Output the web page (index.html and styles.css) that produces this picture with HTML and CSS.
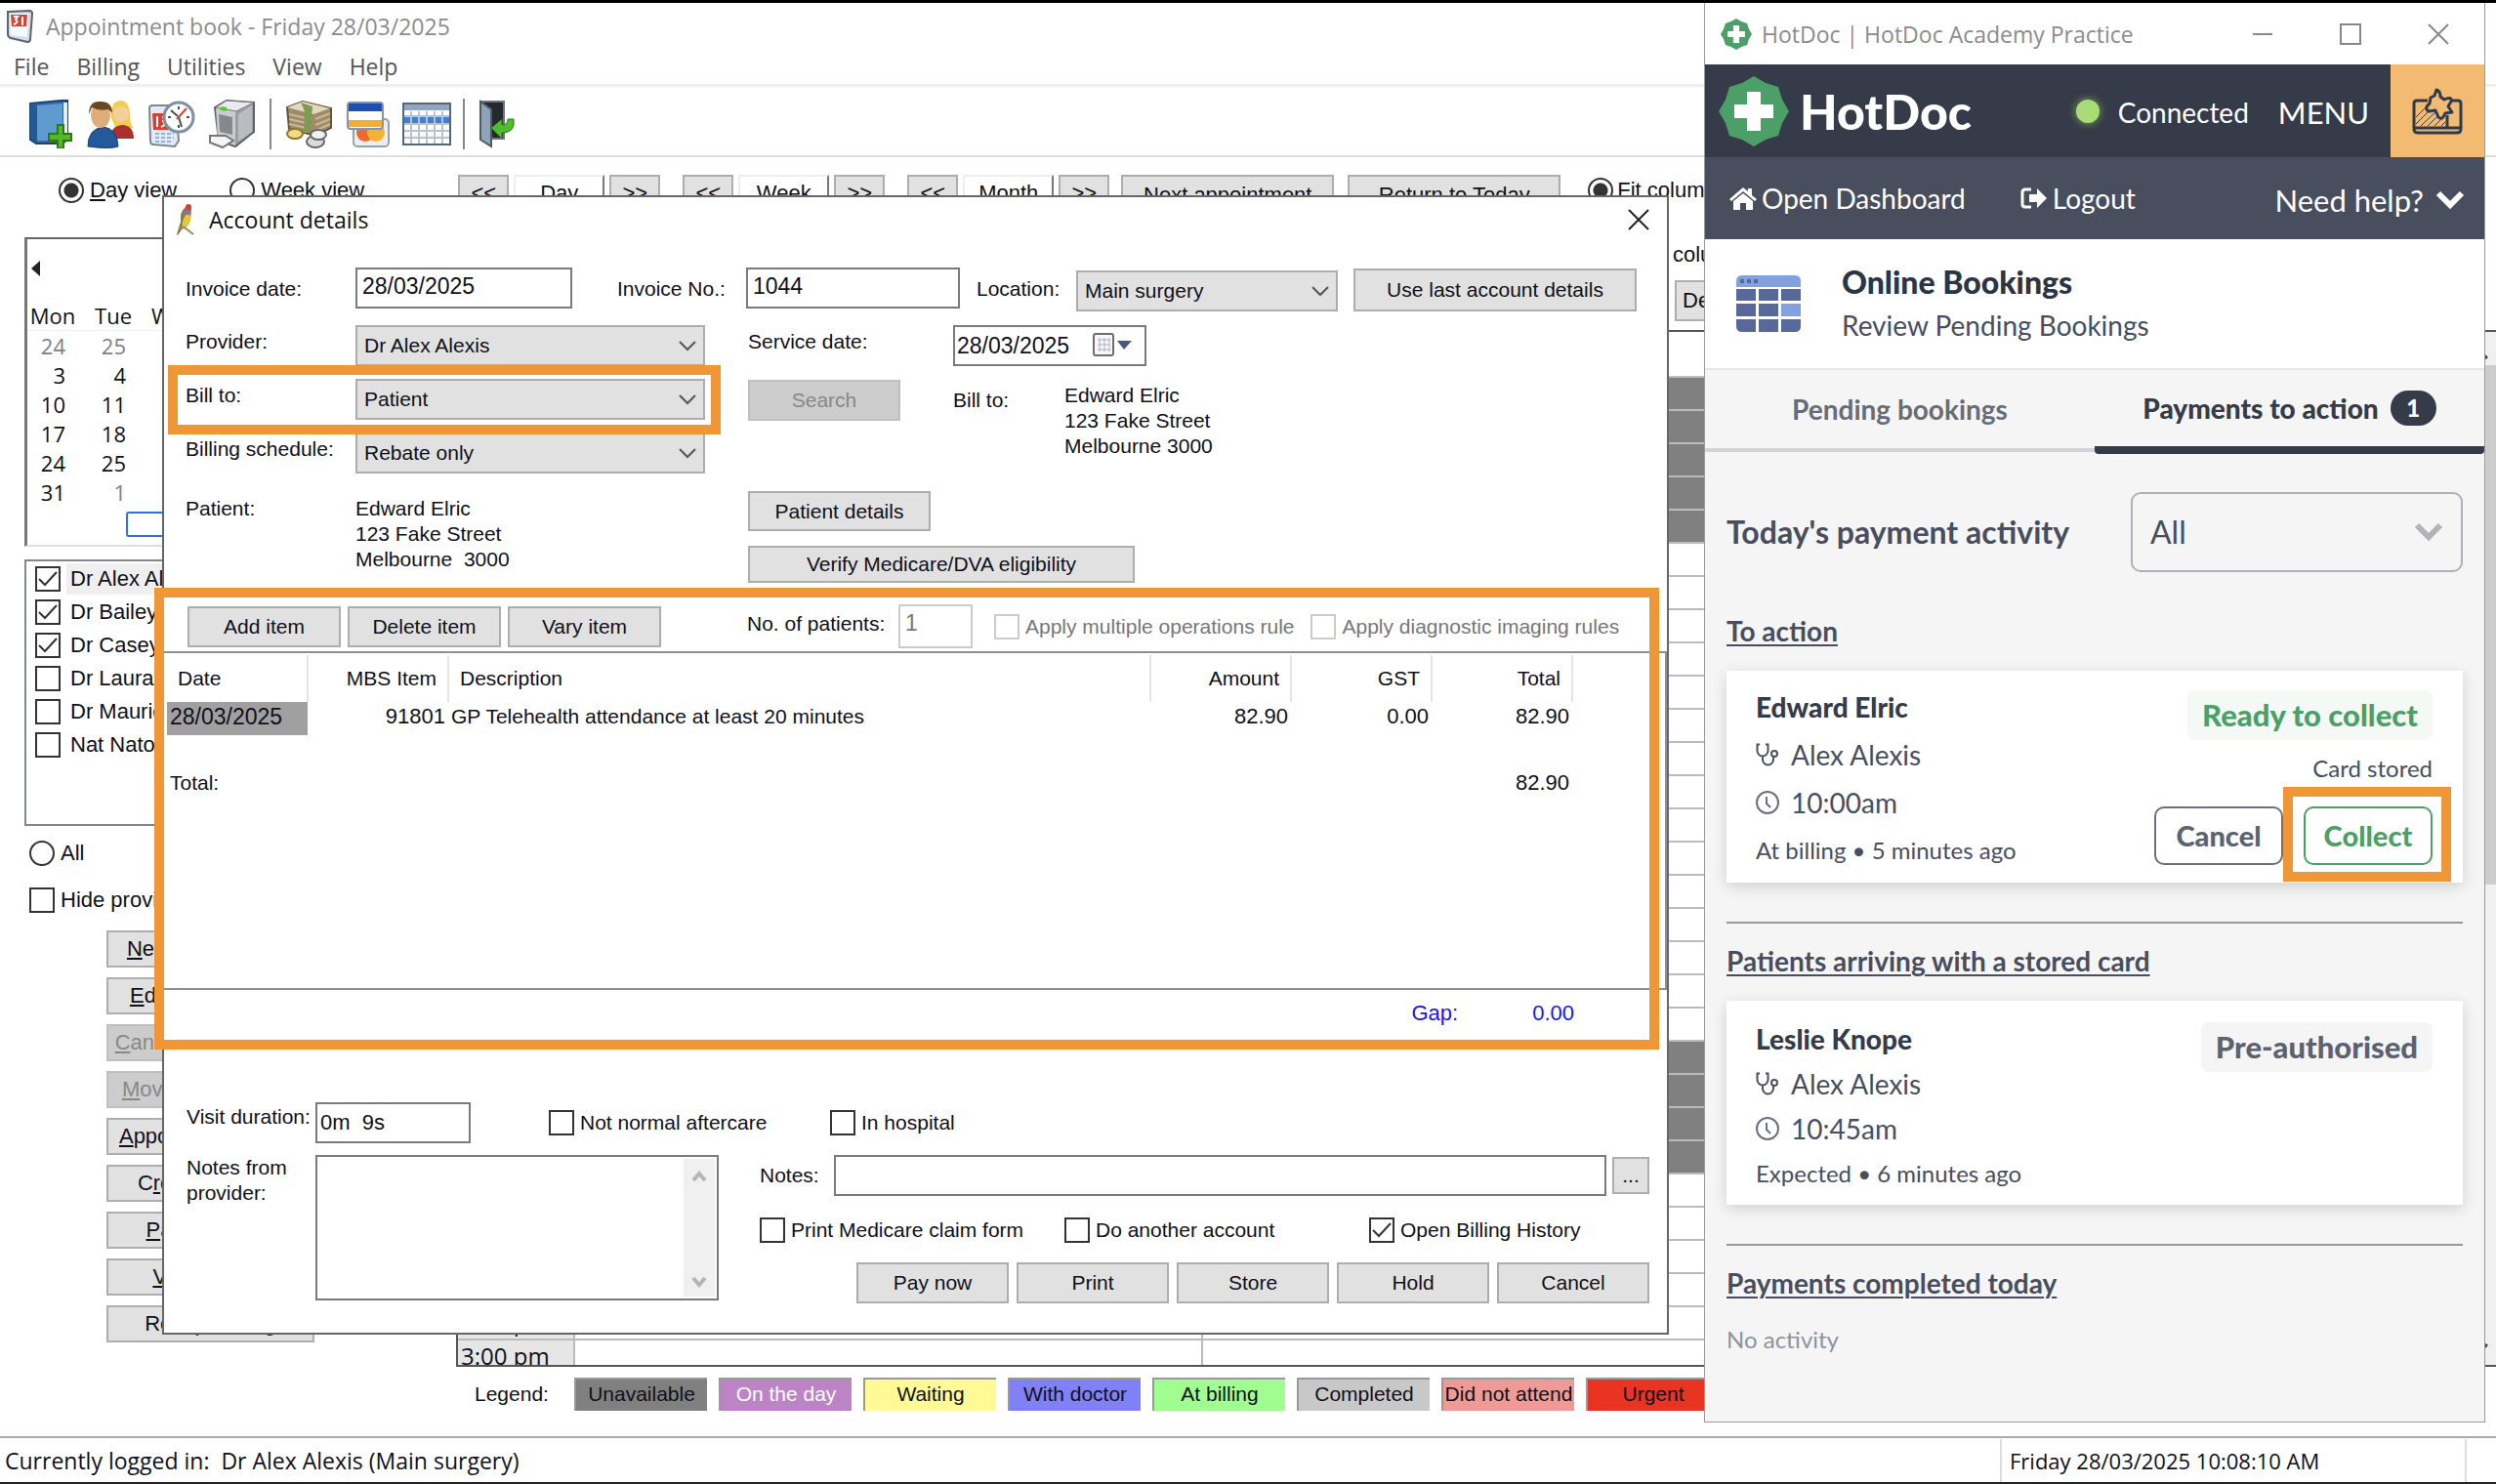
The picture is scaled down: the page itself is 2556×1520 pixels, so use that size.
FILE: index.html
```html
<!DOCTYPE html>
<html lang="en">
<head>
<meta charset="utf-8">
<title>Appointment book - Friday 28/03/2025</title>
<link rel="stylesheet" href="styles.css">
</head>
<body>
<svg width="0" height="0" class="defs" aria-hidden="true">
  <symbol id="hotdoc" viewBox="-36 -36 72 72">
    <path fill="#4c9f67" d="M0-36 12-29 25-25 29-12 36 0 29 12 25 25 12 29 0 36-12 29-25 25-29 12-36 0-29-12-25-25-12-29Z"/>
    <path fill="#fff" d="M-7-20H7V-7H20V7H7V20H-7V7H-20V-7H-7Z"/>
  </symbol>
  <symbol id="steth" viewBox="0 0 24 24">
    <path fill="none" stroke="#4a505e" stroke-width="2" d="M4 1.500H1.500V8a5.500 5.500 0 0 0 11 0V1.500H10M7 13.500V17a5.500 5.500 0 0 0 11 0V14"/>
    <circle cx="19" cy="11" r="3" fill="none" stroke="#4a505e" stroke-width="2"/>
  </symbol>
  <symbol id="clock" viewBox="0 0 24 24">
    <circle cx="12" cy="12" r="11" fill="none" stroke="#6b7080" stroke-width="2"/>
    <path fill="none" stroke="#6b7080" stroke-width="2" d="M11 6v7l4 4"/>
  </symbol>
</svg>

<main class="app">
  <header class="app-title">
    <svg width="30" height="34" viewBox="0 0 30 34"><path d="M3 2 25 1q3 0 3 3l-2 26q0 3-3 3L6 29q-3-1-3-4z" fill="#d5dde8" stroke="#5b6472" stroke-width="2"/><path d="M5 4h19l-1 24-17-2z" fill="#f6f9ff"/><path d="M6 5h17l-1 12H7z" fill="#cf4a36"/><path d="M9 7h4l-2 3q4 3-2 5M18 7v9" stroke="#fff" stroke-width="2" fill="none"/></svg>
    <h1>Appointment book - Friday 28/03/2025</h1>
  </header>
  <nav class="menu">
    <a href="#">File</a><a href="#">Billing</a><a href="#">Utilities</a><a href="#">View</a><a href="#">Help</a>
  </nav>
  <div class="toolbar">
    <button aria-label="New appointment book"><svg width="48" height="50" viewBox="0 0 48 50"><path d="M3 4 34 1h7v40l-5 4H9l-6-4z" fill="#2f6ca6" stroke="#1d4470" stroke-width="2"/><path d="M10 6 36 4v38H10z" fill="#5f9bd0"/><path d="M37 3h4v38h-4z" fill="#e6edf4"/><path d="M3 4l7 2v38l-7-4z" fill="#245a8f"/><path d="M31 26h6v9h8v7h-8v8h-6v-8h-9v-7h9z" fill="#57b52b" stroke="#2b7a13" stroke-width="2"/></svg></button>
    <button aria-label="Patients"><svg width="50" height="50" viewBox="0 0 50 50"><path d="M26 18q-1-16 9-17 11 0 10 20l3 8H30z" fill="#f2ce4e"/><path d="M24 40q2-14 14-14 11 1 11 14z" fill="#a8322a"/><circle cx="36" cy="15" r="8" fill="#f4cf9d"/><path d="M2 48q0-18 16-20 14 2 15 20-8 3-31 0z" fill="#245a9c" stroke="#173d70"/><ellipse cx="15" cy="16" rx="10" ry="13" fill="#dfae78"/><path d="M3 15Q3 1 15 2q12 0 12 12l-4-4q-10 2-17-2z" fill="#6a4725"/></svg></button>
    <button aria-label="Waiting room"><svg width="50" height="50" viewBox="0 0 50 50"><path d="M3 9q0-3 3-3h24l3 36-4 6L7 46q-3 0-3-4z" fill="#e3eaf3" stroke="#7c8796" stroke-width="2"/><path d="M6 14h17v17H7z" fill="#d4412e"/><path d="M11 17v11m5-10h4l-3 4q4 4-2 6" stroke="#fff" stroke-width="2" fill="none"/><path d="M9 35h19M9 39h19M9 43h17" stroke="#8fb1dc" stroke-width="2" stroke-dasharray="4 2"/><circle cx="33" cy="18" r="15" fill="#fff" stroke="#7c8fa5" stroke-width="3"/><path d="M33 7v3m0 16v3M22 18h3m16 0h3M32 17l-7-6m8 7 3 10" stroke="#46505c" stroke-width="2"/><path d="M31 20 41 9" stroke="#d4412e" stroke-width="2"/></svg></button>
    <button aria-label="Print"><svg width="52" height="50" viewBox="0 0 52 50"><path d="M8 8 20 1l28 2v30L29 48 12 42z" fill="#9b9fa3" stroke="#606468" stroke-width="2"/><path d="m9 8 20 4v35l-18-6z" fill="#c9ccd0"/><path d="M9 8 20 1l28 2-18 9z" fill="#e9ebee" stroke="#777" /><path d="M32 15 46 6v27L32 43z" fill="#b9bcc1"/><path d="M12 15l14 3v18l-13-3z" fill="#85898e"/><path d="M3 37h16l8 5-11 7-13-5z" fill="#f5f5f5" stroke="#777" stroke-width="2"/><path d="M14 9l6 1" stroke="#4ad02c" stroke-width="4"/></svg></button>
    <span class="sep"></span>
    <button aria-label="Payments"><svg width="50" height="50" viewBox="0 0 50 50"><path d="M2 8 18 2l12 3 17 4v20L31 37 4 30z" fill="#a08a6a" stroke="#665338" stroke-width="2"/><path d="M2 8 18 2l28 7-17 6z" fill="#e3d9c3"/><path d="M4 15l22 5m-22 0 22 5M4 25l22 5m5-10 15-6M31 26l15-6M31 32l15-7" stroke="#c9b896" stroke-width="2"/><path d="M16 3l12 4-2 27h-7l1-22z" fill="#7e9b52"/><ellipse cx="10" cy="35" rx="8" ry="5" fill="#f0dc82" stroke="#8f762a" stroke-width="2"/><ellipse cx="31" cy="43" rx="9" ry="6" fill="#d9dbde" stroke="#666" stroke-width="2"/><ellipse cx="34" cy="36" rx="8" ry="5" fill="#eff0f2" stroke="#666" stroke-width="2"/></svg></button>
    <button aria-label="Cards"><svg width="46" height="50" viewBox="0 0 46 50"><rect x="8" y="20" width="36" height="28" rx="4" fill="#eceff2" stroke="#9aa0a8" stroke-width="2"/><circle cx="20" cy="34" r="9" fill="#ee6a2c"/><circle cx="31" cy="34" r="9" fill="#f6b32f"/><rect x="2" y="3" width="36" height="27" rx="3" fill="#fff" stroke="#8c929b" stroke-width="2"/><path d="M3 4h34v8H3z" fill="#1c4fb0"/><path d="M3 21h34v7H3z" fill="#efb032"/></svg></button>
    <button aria-label="Calendar"><svg width="50" height="46" viewBox="0 0 50 46"><rect x="1" y="2" width="48" height="42" fill="#fff" stroke="#56677c" stroke-width="2"/><path d="M2 3h46v6H2z" fill="#8ea6bf"/><path d="M2 15h46v8H2z" fill="#3e82cf"/><path d="M2 15h46M2 23h46M2 30h46M2 37h46M9 10v33M17 10v33M25 10v33M33 10v33M41 10v33" stroke="#b7c3d1" stroke-width="2"/></svg></button>
    <span class="sep"></span>
    <button class="exit" aria-label="Exit"><svg width="38" height="50" viewBox="0 0 38 50"><path d="M2 2h24v38H14z" fill="#25282c" stroke="#6f757c" stroke-width="2"/><path d="m2 2 11 8v38L2 41z" fill="#8fa4b8" stroke="#4c5b6a" stroke-width="2"/><path d="M36 20q2 14-12 14v6L13 29l11-9v6q6 0 6-6z" fill="#4fbd30" stroke="#2b7a13"/></svg></button>
  </div>

  <div class="viewbar">
    <label class="check"><input type="radio" name="view" checked><span><u>D</u>ay view</span></label>
    <label class="check week"><input type="radio" name="view"><span><u>W</u>eek view</span></label>
    <div class="stepper"><button>&lt;&lt;</button><button class="unit">Day</button><button>&gt;&gt;</button></div>
    <div class="stepper"><button>&lt;&lt;</button><button class="unit">Week</button><button>&gt;&gt;</button></div>
    <div class="stepper"><button>&lt;&lt;</button><button class="unit">Month</button><button>&gt;&gt;</button></div>
    <div class="jumps"><button>Next appointment</button><button>Return to Today</button></div>
    <label class="check fit"><input type="radio" name="fit" checked><span><u>F</u>it columns</span></label>
  </div>

  <div class="workspace">
    <aside class="sidebar">
      <section class="calendar">
        <button class="prev" aria-label="Previous month"></button>
        <table>
          <thead><tr><th>Mon</th><th>Tue</th><th>Wed</th></tr></thead>
          <tbody>
            <tr class="dim"><td>24</td><td>25</td><td>26</td></tr>
            <tr><td>3</td><td>4</td><td>5</td></tr>
            <tr><td>10</td><td>11</td><td>12</td></tr>
            <tr><td>17</td><td>18</td><td>19</td></tr>
            <tr><td>24</td><td>25</td><td>26</td></tr>
            <tr><td>31</td><td class="dim">1</td><td class="dim">2</td></tr>
          </tbody>
        </table>
        <div class="today"></div>
      </section>
      <section class="providers">
        <label class="check on"><input type="checkbox" checked><span>Dr Alex Alexis</span></label>
        <label class="check"><input type="checkbox" checked><span>Dr Bailey</span></label>
        <label class="check"><input type="checkbox" checked><span>Dr Casey</span></label>
        <label class="check"><input type="checkbox"><span>Dr Laura</span></label>
        <label class="check"><input type="checkbox"><span>Dr Maurice</span></label>
        <label class="check"><input type="checkbox"><span>Nat Nato</span></label>
      </section>
      <section class="filters">
        <label class="check"><input type="radio" name="all"><span>All</span></label>
        <label class="check"><input type="checkbox"><span>Hide providers</span></label>
      </section>
      <section class="actions">
        <button><u>N</u>ew appointment</button>
        <button><u>E</u>dit appointment</button>
        <button disabled><u>C</u>ancel appointment</button>
        <button disabled><u>M</u>ove appointment</button>
        <button><u>A</u>ppointment report</button>
        <button>C<u>r</u>eate account</button>
        <button><u>P</u>ay accounts</button>
        <button><u>V</u>iew history</button>
        <button>Reception lo<u>g</u></button>
      </section>
    </aside>

    <section class="book">
      <div class="book-head">
        <span>columns</span>
        <button>Default</button>
      </div>
      <div class="book-view">
        <table class="slots">
          <thead><tr><th class="time"></th><th class="first"></th><th></th></tr></thead>
          <tbody>
            <tr><th>7:45 am</th><td></td><td class="off"></td></tr>
            <tr><th>8:00 am</th><td></td><td class="off"></td></tr>
            <tr><th>8:15 am</th><td></td><td class="off"></td></tr>
            <tr><th>8:30 am</th><td></td><td class="off"></td></tr>
            <tr><th>8:45 am</th><td></td><td class="off"></td></tr>
            <tr><th>9:00 am</th><td></td><td></td></tr>
            <tr><th>9:15 am</th><td></td><td></td></tr>
            <tr><th>9:30 am</th><td></td><td></td></tr>
            <tr><th>9:45 am</th><td></td><td></td></tr>
            <tr><th>10:00 am</th><td></td><td></td></tr>
            <tr><th>10:15 am</th><td></td><td></td></tr>
            <tr><th>10:30 am</th><td></td><td></td></tr>
            <tr><th>10:45 am</th><td></td><td></td></tr>
            <tr><th>11:00 am</th><td></td><td></td></tr>
            <tr><th>11:15 am</th><td></td><td></td></tr>
            <tr><th>11:30 am</th><td></td><td></td></tr>
            <tr><th>11:45 am</th><td></td><td></td></tr>
            <tr><th>12:00 pm</th><td></td><td></td></tr>
            <tr><th>12:15 pm</th><td></td><td></td></tr>
            <tr><th>12:30 pm</th><td></td><td></td></tr>
            <tr><th>12:45 pm</th><td></td><td class="off"></td></tr>
            <tr><th>1:00 pm</th><td></td><td class="off"></td></tr>
            <tr><th>1:15 pm</th><td></td><td class="off"></td></tr>
            <tr><th>1:30 pm</th><td></td><td class="off"></td></tr>
            <tr><th>1:45 pm</th><td></td><td></td></tr>
            <tr><th>2:00 pm</th><td></td><td></td></tr>
            <tr><th>2:15 pm</th><td></td><td></td></tr>
            <tr><th>2:30 pm</th><td></td><td></td></tr>
            <tr><th>2:45 pm</th><td></td><td></td></tr>
            <tr><th>3:00 pm</th><td></td><td></td></tr>
          </tbody>
        </table>
        <div class="book-scroll">
          <svg width="18" height="12" viewBox="0 0 18 12"><path d="M1 11 9 3l8 8" fill="none" stroke="#444" stroke-width="3"/></svg>
          <span class="thumb"></span>
          <svg width="18" height="12" viewBox="0 0 18 12"><path d="M1 1l8 8 8-8" fill="none" stroke="#444" stroke-width="3"/></svg>
        </div>
      </div>
      <div class="legend">
        <span class="legend-label">Legend:</span>
        <span class="key unavailable">Unavailable</span>
        <span class="key on-day">On the day</span>
        <span class="key waiting">Waiting</span>
        <span class="key with-doctor">With doctor</span>
        <span class="key at-billing">At billing</span>
        <span class="key completed">Completed</span>
        <span class="key absent">Did not attend</span>
        <span class="key urgent">Urgent</span>
      </div>
    </section>
  </div>
  <footer class="status">
    <span class="who">Currently logged in:&nbsp; Dr Alex Alexis (Main surgery)</span>
    <span class="when">Friday 28/03/2025 10:08:10 AM</span>
  </footer>
</main>

<section class="dialog" role="dialog" aria-labelledby="dlg-title">
  <header class="dialog-title">
    <svg width="20" height="34" viewBox="0 0 20 34"><path d="M13 2q4 0 4 5l-1 10q-2 8-8 9l-5 7-1-1L6 19Q5 9 10 5z" fill="#8a7a50"/><path d="M12 11q5 0 4 6-2 8-8 9-2-7 4-15z" fill="#e3c93a"/><path d="M10 8q3-3 6 0v4h-6z" fill="#8c6fae"/><circle cx="14" cy="4" r="3" fill="#d4412e"/><path d="m4 26 6-1 9 7" stroke="#9a8a55" stroke-width="2" fill="none"/></svg>
    <h2 id="dlg-title">Account details</h2>
    <button class="close" aria-label="Close"><svg width="22" height="22" viewBox="0 0 22 22"><path d="m1 1 20 20M21 1 1 21" stroke="#222" stroke-width="2"/></svg></button>
  </header>

  <div class="invoice-row">
    <label for="inv-date">Invoice date:</label>
    <input id="inv-date" type="text" value="28/03/2025">
    <label class="inv-no" for="inv-no">Invoice No.:</label>
    <input id="inv-no" type="text" value="1044">
    <label class="loc" for="loc">Location:</label>
    <select id="loc"><option>Main surgery</option></select>
    <button>Use last account details</button>
  </div>

  <div class="account-grid">
    <label for="prov">Provider:</label>
    <select id="prov"><option>Dr Alex Alexis</option></select>
    <label for="svc">Service date:</label>
    <div class="date"><input id="svc" type="text" value="28/03/2025"><button aria-label="Pick date"><svg width="42" height="28" viewBox="0 0 42 28"><rect x="2" y="2" width="20" height="22" rx="2" fill="#f7f7fa" stroke="#75696b" stroke-width="2"/><path d="M6 8h13M6 13h13M6 18h13M8 6v14M13 6v14M18 6v14" stroke="#a9b2c2" stroke-width="1"/><path d="M26 9h15l-8 9z" fill="#44598a"/></svg></button></div>

    <label for="bill">Bill to:</label>
    <select id="bill"><option>Patient</option></select>
    <button class="search" disabled>Search</button>
    <span class="bill-label">Bill to:</span>
    <address class="bill-address">Edward Elric<br>123 Fake Street<br>Melbourne 3000</address>

    <label for="sched">Billing schedule:</label>
    <select id="sched"><option>Rebate only</option></select>

    <span class="patient-label">Patient:</span>
    <address class="patient-address">Edward Elric<br>123 Fake Street<br>Melbourne&nbsp; 3000</address>
    <div class="patient-actions">
      <button>Patient details</button>
      <button class="verify">Verify Medicare/DVA eligibility</button>
    </div>
  </div>

  <div class="item-bar">
    <button>Add item</button>
    <button>Delete item</button>
    <button>Vary item</button>
    <label class="count" for="count">No. of patients:</label>
    <input id="count" type="text" value="1" disabled>
    <label class="check"><input type="checkbox" disabled><span>Apply multiple operations rule</span></label>
    <label class="check"><input type="checkbox" disabled><span>Apply diagnostic imaging rules</span></label>
  </div>
  <div class="item-list">
    <table>
      <thead><tr><th class="c-date">Date</th><th class="c-num">MBS Item</th><th class="c-desc">Description</th><th class="c-num">Amount</th><th class="c-num">GST</th><th class="c-num">Total</th></tr></thead>
      <tbody>
        <tr><td class="picked">28/03/2025</td><td class="num">91801</td><td>GP Telehealth attendance at least 20 minutes</td><td class="num">82.90</td><td class="num">0.00</td><td class="num">82.90</td></tr>
        <tr class="blank"><td colspan="6"></td></tr>
        <tr><td>Total:</td><td></td><td></td><td></td><td></td><td class="num">82.90</td></tr>
      </tbody>
    </table>
  </div>
  <div class="gap-row"><span>Gap:</span><output>0.00</output></div>

  <div class="visit-row">
    <label for="visit">Visit duration:</label>
    <input id="visit" type="text" value="0m  9s">
    <label class="check aftercare"><input type="checkbox"><span>Not normal aftercare</span></label>
    <label class="check"><input type="checkbox"><span>In hospital</span></label>
  </div>
  <div class="notes-area">
    <label for="pnotes">Notes from provider:</label>
    <div class="memo"><textarea id="pnotes"></textarea>
      <div class="memo-scroll">
        <svg width="16" height="12" viewBox="0 0 16 12"><path d="M2 10l6-7 6 7" fill="none" stroke="#b5b5b5" stroke-width="4"/></svg>
        <svg width="16" height="12" viewBox="0 0 16 12"><path d="M2 2l6 7 6-7" fill="none" stroke="#b5b5b5" stroke-width="4"/></svg>
      </div>
    </div>
    <div class="finish">
      <div class="notes-row"><label for="notes">Notes:</label><input id="notes" type="text"><button class="more">...</button></div>
      <div class="options">
        <label class="check"><input type="checkbox"><span>Print Medicare claim form</span></label>
        <label class="check"><input type="checkbox"><span>Do another account</span></label>
        <label class="check"><input type="checkbox" checked><span>Open Billing History</span></label>
      </div>
      <div class="buttons"><button>Pay now</button><button>Print</button><button>Store</button><button>Hold</button><button>Cancel</button></div>
    </div>
  </div>
  <div class="mark mark-bill"></div>
  <div class="mark mark-items"></div>
</section>

<section class="hotdoc">
  <header class="hd-title">
    <svg width="32" height="32"><use href="#hotdoc"/></svg>
    <h2>HotDoc | HotDoc Academy Practice</h2>
    <button aria-label="Minimise"><svg width="22" height="22" viewBox="0 0 22 22"><path d="M1 11h20" stroke="#888" stroke-width="2"/></svg></button>
    <button aria-label="Maximise"><svg width="22" height="22" viewBox="0 0 22 22"><path d="M1 1h20v20H1z" fill="none" stroke="#888" stroke-width="2"/></svg></button>
    <button aria-label="Close"><svg width="22" height="22" viewBox="0 0 22 22"><path d="m1 1 20 20M21 1 1 21" stroke="#888" stroke-width="2"/></svg></button>
  </header>
  <div class="hd-brand">
    <svg width="72" height="72"><use href="#hotdoc"/></svg>
    <strong>HotDoc</strong>
    <span class="dot"></span>
    <span class="connected">Connected</span>
    <a class="menu-link" href="#">MENU</a>
    <button class="academy" aria-label="Academy"><svg width="52" height="48" viewBox="0 0 52 48"><path d="M16 13H5q-3 0-3 3v26q0 4 4 4h40q4 0 4-4V16q0-3-3-3h-6M2 41h48M36 28v13" fill="none" stroke="#2f3a4c" stroke-width="3"/><path d="M4 30 16 18M4 37l18-18M9 39l17-16M16 39l12-12M23 39l10-10M30 39l4-4" stroke="#2f3a4c" stroke-width="1"/><path d="M25 2Q29 3 29 9L33 12Q41 8 40 14L37 19 41 25 34 26Q31 34 27 30L24 23 17 24Q12 21 18 16L19 10 23 8Z" fill="#f3bb71" stroke="#2f3a4c" stroke-width="3" stroke-linejoin="round"/></svg></button>
  </div>
  <nav class="hd-nav">
    <a href="#"><svg width="28" height="24" viewBox="0 0 28 24"><path fill="#fff" d="M14 1 0 13l2 2L14 5l12 10 2-2-5-4V2h-4v3zM14 7 4 15v9h7v-7h6v7h7v-9z"/></svg>Open Dashboard</a>
    <a class="logout" href="#"><svg width="28" height="22" viewBox="0 0 28 22"><path fill="none" stroke="#fff" stroke-width="3" d="M11 2H5Q2 2 2 5v12q0 3 3 3h6"/><path fill="#fff" d="M9 7h8V1l10 10-10 10v-6H9z"/></svg>Logout</a>
    <a class="help" href="#">Need help?<svg width="30" height="20" viewBox="0 0 30 20"><path d="m3 3 12 12L27 3" fill="none" stroke="#fff" stroke-width="6"/></svg></a>
  </nav>
  <div class="hd-section">
    <svg width="66" height="58" viewBox="0 0 66 58"><path d="M6 0h54q6 0 6 6v6H0V6q0-6 6-6z" fill="#81a1e1"/><path d="M4 6h4m3 0h4m3 0h4" stroke="#56699a" stroke-width="4"/><path d="M0 14h20v12H0zM23 14h20v12H23zM46 14h20v12H46zM0 29h20v13H0zM23 29h20v13H23zM0 45h20v13H6q-6 0-6-6zM23 45h20v13H23zM46 45h20v7q0 6-6 6H46z" fill="#56699a"/><path d="M46 29h20v13H46z" fill="#81a1e1"/></svg>
    <div><h3>Online Bookings</h3><p>Review Pending Bookings</p></div>
  </div>
  <div class="hd-tabs" role="tablist">
    <button role="tab">Pending bookings</button>
    <button role="tab" class="active" aria-selected="true">Payments to action<span class="badge">1</span></button>
  </div>
  <div class="hd-body">
    <div class="activity">
      <label for="activity">Today's payment activity</label>
      <select id="activity"><option>All</option></select>
    </div>
    <h4>To action</h4>
    <article class="card">
      <div class="info">
        <strong>Edward Elric</strong>
        <span><svg width="24" height="24"><use href="#steth"/></svg>Alex Alexis</span>
        <span><svg width="24" height="24"><use href="#clock"/></svg>10:00am</span>
        <small>At billing • 5 minutes ago</small>
      </div>
      <div class="state">
        <span class="tag ready">Ready to collect</span>
        <small>Card stored</small>
        <div class="card-actions"><button>Cancel</button><button class="collect">Collect</button></div>
      </div>
      <div class="mark mark-collect"></div>
    </article>
    <hr>
    <h4>Patients arriving with a stored card</h4>
    <article class="card compact">
      <div class="info">
        <strong>Leslie Knope</strong>
        <span><svg width="24" height="24"><use href="#steth"/></svg>Alex Alexis</span>
        <span><svg width="24" height="24"><use href="#clock"/></svg>10:45am</span>
        <small>Expected • 6 minutes ago</small>
      </div>
      <div class="state"><span class="tag">Pre-authorised</span></div>
    </article>
    <hr>
    <h4>Payments completed today</h4>
    <p class="none">No activity</p>
  </div>
</section>
</body>
</html>
```
FILE: styles.css
```css
* { box-sizing: border-box; }
body { margin: 0; position: relative; overflow: hidden; background: #fff; color: #101018; font: 22px/26px "Liberation Sans", sans-serif; }
.defs { position: absolute; }
h1, h2, h3, h4, p, address { margin: 0; font: inherit; }
a { color: inherit; text-decoration: none; }
svg { flex: none; display: block; }
button, input, select, textarea { font: inherit; color: inherit; margin: 0; }
button { padding: 0; border: 2px solid #adadad; background: #e1e1e1; white-space: nowrap; }
button:disabled { background: #ccc; border-color: #bfbfbf; color: #888; }
input[type=text] { height: 42px; border: 2px solid #7a7a7a; background: #fff; padding: 0 5px 3px; min-width: 0; font-size: 23px; }
input[type=text]:disabled { border-color: #ccc; color: #777; }
select { height: 42px; appearance: none; border: 2px solid #adadad; border-radius: 0; padding: 0 7px; background: #e1e1e1 url("data:image/svg+xml,%3Csvg xmlns='http://www.w3.org/2000/svg' width='18' height='12'%3E%3Cpath d='M1 2l8 8 8-8' fill='none' stroke='%23555' stroke-width='2'/%3E%3C/svg%3E") no-repeat right 7px center; }
.check { display: flex; align-items: center; gap: 6px; white-space: nowrap; }
.check input { flex: none; appearance: none; width: 26px; height: 26px; border: 2px solid #333; background: #fff; }
.check input[type=radio] { border-radius: 50%; }
.check input[type=radio]:checked { background: radial-gradient(circle, #333 7px, #fff 8px); }
.check input[type=checkbox]:checked { background: url("data:image/svg+xml,%3Csvg xmlns='http://www.w3.org/2000/svg' width='22' height='22'%3E%3Cpath d='M2 11l6 6L20 4' fill='none' stroke='%23333' stroke-width='2'/%3E%3C/svg%3E"); }
.check input:disabled { border-color: #ccc; }
.check input:disabled + span { color: #777; }

/* main window */
.app { height: 100vh; display: flex; flex-direction: column; border-top: 3px solid #000; }
.app-title, .menu, .status, .calendar, .slots, .dialog-title, .hd-title { font-family: "Open Sans", sans-serif; }
.app-title, .menu, .status, .dialog-title { font-size: 23px; }
.app-title { display: flex; align-items: center; height: 48px; padding-left: 5px; gap: 12px; color: #8c8c8c; }
.menu { display: flex; gap: 28px; height: 35px; padding-left: 14px; line-height: 34px; color: #555; }
.toolbar { display: flex; align-items: center; height: 75px; padding: 5px 0 0 28px; gap: 12px; border-top: 3px solid #eee; border-bottom: 2px solid #ddd; }
.toolbar button { border: 0; background: none; }
.toolbar .sep { width: 2px; height: 52px; background: #888; }
.toolbar .sep + button { margin-left: 2px; }
.toolbar .exit { margin-left: 10px; }
.viewbar { display: flex; align-items: flex-start; padding: 18px 0 0 60px; height: 58px; }
.viewbar > .check { margin-top: 3px; }
.viewbar > .week { margin-left: 54px; width: 234px; }
.viewbar > .fit { gap: 4px; }
.stepper { display: flex; gap: 5px; margin-right: 23px; }
.stepper button { width: 52px; height: 38px; }
.stepper .unit { width: 93px; background: #fff; border-color: #eee #777 #777 #eee; }
.jumps { display: flex; gap: 14px; margin: 0 28px 0 -11px; }
.jumps button { width: 218px; height: 41px; }

.workspace { flex: 1; display: flex; min-height: 0; }
.sidebar { flex: none; width: 442px; margin: 24px 0 0 25px; }
.calendar { height: 317px; border: 2px solid #ddd; border-top-color: #666; border-left: 3px solid #777; overflow: hidden; }
.calendar .prev { display: block; margin: 22px 0 0 4px; width: 0; height: 0; border: solid transparent; border-width: 8px 9px 8px 0; border-right-color: #222; background: none; }
.calendar table { margin-top: 25px; border-collapse: collapse; }
.calendar th { width: 62px; height: 30px; padding: 0 10px 0 0; font-weight: normal; line-height: 28px; border-bottom: 1px solid #eee; }
.calendar td { height: 30px; padding: 0 23px 0 0; text-align: right; line-height: 30px; }
.dim { color: #808088; }
.today { margin: 5px 0 0 101px; width: 60px; height: 26px; border: 2px solid #2f74d0; border-radius: 3px; }
.providers { margin-top: 13px; height: 273px; border: 2px solid #82878f; padding: 1px 0 0 9px; }
.providers .check { height: 34px; }
.providers span { padding: 3px 4px; flex: 1; }
.providers .on span { background: #efefef; }
.filters { margin: 11px 0 0 5px; display: grid; gap: 14px; }
.filters .check { height: 34px; }
.actions { margin: 14px 0 0 84px; display: grid; gap: 10px; width: 213px; }
.actions button { height: 38px; }

.book { flex: 1; min-width: 0; display: flex; flex-direction: column; }
.book-head { height: 119px; padding: 29px 0 0 1246px; display: flex; flex-direction: column; align-items: flex-start; gap: 13px; }
.book-head button { width: 110px; height: 42px; margin-left: 2px; padding-left: 6px; text-align: left; }
.book-view { flex: 1; min-height: 0; overflow: hidden; display: flex; border: solid #555; border-width: 2px 0 2px 2px; }
.slots { flex: 1; align-self: flex-start; border-collapse: collapse; table-layout: fixed; font-size: 24px; }
.slots thead th { height: 46px; }
.slots .time { width: 119px; }
.slots .first { width: 643px; }
.slots tbody th, .slots td { height: 34px; padding: 0 0 2px 3px; border: solid #bbb; border-width: 2px 2px 0 0; line-height: 28px; }
.slots tbody th { background: #e6e6e6; font-weight: normal; text-align: left; }
.slots .off { background: #808080; }
.book-scroll { width: 34px; background: #f0f0f0; display: flex; flex-direction: column; align-items: center; padding: 16px 0 10px; }
.book-scroll .thumb { width: 34px; height: 532px; margin: 6px 0 auto; background: #cdcdcd; }
.legend { display: flex; align-items: center; gap: 12px; height: 71px; padding: 11px 0 26px 19px; font-size: 21px; }
.legend-label { width: 90px; }
.key { width: 136px; height: 34px; border: solid #999; border-width: 2px 0 0 2px; text-align: center; line-height: 29px; white-space: nowrap; }
.unavailable { background: #808080; }
.on-day { background: #bd84c5; color: #fff; }
.waiting { background: #fffa96; }
.with-doctor { background: #8080f8; }
.at-billing { background: #a0fd8f; }
.completed { background: #c8c8c8; }
.absent { background: #f09a97; }
.urgent { background: #e93323; }
.status { display: flex; align-items: center; justify-content: space-between; height: 49px; border-top: 2px solid #aaa; border-bottom: 2px solid #222; padding: 0 30px 0 5px; }
.when { width: 478px; line-height: 44px; border: solid #ddd; border-width: 0 2px; padding-left: 8px; font-size: 22px; }

/* account dialog */
.dialog { position: absolute; left: 166px; right: 847px; top: 200px; background: #fff; border: 2px solid #666; font-size: 21px; }
.dialog-title { display: flex; align-items: center; height: 46px; padding: 0 18px 0 11px; gap: 15px; color: #111; }
.dialog-title .close { margin-left: auto; border: 0; background: none; }
.invoice-row { display: grid; grid-template-columns: 174px 222px 178px 219px 119px 268px 306px; align-items: center; height: 45px; margin: 26px 0 14px 22px; }
.invoice-row input { align-self: start; }
.invoice-row label { padding-bottom: 2px; }
.invoice-row .inv-no { padding-left: 46px; }
.invoice-row .loc { padding-left: 17px; }
.invoice-row select { margin-top: 3px; }
.invoice-row button { height: 44px; margin-left: 16px; }
.account-grid { display: grid; grid-template-columns: 174px 402px 210px 114px 1fr; grid-template-rows: 42px 42px 42px auto; row-gap: 13px; margin-left: 22px; align-items: start; }
.account-grid > label { padding-top: 4px; }
.account-grid > select { width: 358px; }
.date { grid-column: 4 / 6; display: flex; align-items: center; width: 198px; height: 42px; border: 2px solid #7a7a7a; }
.date input[type=text] { border: 0; width: 140px; height: 36px; padding: 0 2px; }
.date button { border: 0; background: none; }
.search { width: 156px; height: 42px; margin-top: 1px; }
.bill-label { padding-top: 9px; }
.bill-address { grid-row: 2 / 4; grid-column: 5; padding-top: 4px; }
.patient-label, .patient-address { grid-row: 4; padding-top: 10px; }
.patient-label { grid-column: 1; }
.patient-address { grid-column: 2; }
.patient-actions { display: grid; gap: 15px; grid-row: 4; grid-column: 3 / 6; justify-items: start; padding-top: 5px; }
.patient-actions button { width: 187px; height: 41px; }
.patient-actions .verify { width: 396px; height: 38px; }
.item-bar { display: flex; align-items: center; height: 45px; margin: 22px 0 3px 24px; }
.item-bar button { width: 157px; height: 42px; margin-right: 7px; }
.item-bar .count { margin-left: 81px; width: 155px; padding-bottom: 6px; }
.item-bar input[type=text] { width: 76px; height: 45px; padding: 0 5px 6px; }
.item-bar .check { margin-left: 22px; }
.item-bar .check + .check { margin-left: 17px; }
.item-list { border: 2px solid #8890a0; border-left: 0; height: 347px; padding: 2px 0 0 3px; }
.item-list table { border-collapse: collapse; width: 1439px; table-layout: fixed; }
.item-list th { height: 48px; width: 144px; padding: 0 11px; font-weight: normal; text-align: left; border-right: 2px solid #e5e5e5; }
.item-list .c-desc { width: 719px; }
.item-list .c-num { text-align: right; }
.item-list td { height: 34px; padding: 0 3px 4px; line-height: 30px; }
.item-list .num { text-align: right; font-size: 22px; }
.item-list .picked { background: #a0a0a0; font-size: 23px; }
.gap-row { display: flex; justify-content: flex-end; gap: 76px; height: 48px; align-items: center; padding-right: 95px; color: #1a14ee; font-size: 22px; }
.visit-row { display: flex; align-items: center; margin: 67px 0 12px 23px; height: 42px; }
.visit-row > label:first-child { width: 132px; padding-bottom: 12px; white-space: nowrap; }
.visit-row input[type=text] { width: 159px; padding: 0 3px; white-space: pre; font-size: 22px; }
.visit-row .aftercare { margin-left: 80px; width: 288px; }
.notes-area { display: flex; align-items: flex-start; padding: 0 18px 30px 23px; }
.notes-area > label { width: 132px; padding-right: 16px; }
.memo { width: 413px; height: 149px; border: 2px solid #7a7a7a; display: flex; padding: 2px; }
.memo textarea { flex: 1; min-width: 0; border: 0; resize: none; }
.memo-scroll { width: 32px; background: #f0f0f0; display: flex; flex-direction: column; justify-content: space-between; align-items: center; padding: 12px 0 9px; }
.finish { flex: 1; margin-left: 42px; }
.notes-row { display: flex; align-items: center; gap: 6px; }
.notes-row label { width: 70px; }
.notes-row input { flex: 1; }
.notes-row .more { width: 38px; height: 38px; }
.options { display: grid; grid-template-columns: 312px 312px auto; margin-top: 22px; }
.buttons { display: flex; justify-content: flex-end; gap: 8px; margin-top: 20px; }
.buttons button { width: 156px; height: 42px; }
.mark { position: absolute; border: 10px solid #ef9736; pointer-events: none; }
.mark-bill { left: 4px; top: 172px; width: 566px; height: 71px; }
.mark-items { left: -10px; right: 8px; top: 400px; height: 473px; }

/* HotDoc panel */
.hotdoc { position: absolute; right: 11px; top: 3px; width: 800px; border: 1px solid #999; border-top: 0; background: #f5f5f5; color: #484e5e; font: 28px/34px Lato, sans-serif; }
.hotdoc button { cursor: pointer; }
.hd-title { display: flex; align-items: center; height: 63px; padding: 0 36px 0 16px; background: #fff; color: #8c8c8c; font-size: 23px; gap: 10px; }
.hd-title h2 { flex: 1; white-space: nowrap; }
.hd-title button { border: 0; background: none; margin-left: 58px; }
.hd-title h2 + button { margin-left: 0; }
.hd-brand { display: flex; align-items: center; height: 95px; padding-left: 14px; background: #353b48; color: #fff; }
.hd-brand strong { margin-left: 11px; font-size: 50px; font-weight: 900; line-height: 60px; }
.dot { margin-left: auto; width: 24px; height: 24px; border-radius: 50%; background: #a9dc76; box-shadow: 0 0 8px #7fae50; }
.connected { margin: 2px 30px 0 19px; }
.menu-link { margin: 2px 22px 0 0; font-size: 31px; }
.academy { width: 96px; height: 95px; border: 0; background: #f3bb71; display: flex; align-items: center; justify-content: center; }
.hd-nav { display: flex; align-items: center; height: 84px; padding: 0 20px 0 25px; background: #484e5e; color: #fff; }
.hd-nav a { display: flex; align-items: center; gap: 5px; }
.hd-nav .logout { margin-left: 56px; }
.hd-nav .help { margin: 4px 0 0 auto; font-size: 31px; gap: 12px; }
.hd-section { display: flex; align-items: center; gap: 42px; height: 132px; padding-left: 32px; background: #fff; }
.hd-section h3 { font-size: 32px; font-weight: 900; line-height: 44px; color: #2d3442; }
.hd-section p { line-height: 44px; font-size: 28px; }
.hd-tabs { display: grid; grid-template-columns: 1fr 1fr; height: 88px; border-top: 2px solid #e6e6e6; }
.hd-tabs button { background: none; border: 0; border-bottom: 4px solid #d2d4d7; margin-bottom: 2px; color: #666c78; font-weight: 700; font-size: 28px; }
.hd-tabs .active { color: #353b48; border-bottom: 8px solid #353b48; border-radius: 4px; margin: 0; display: flex; align-items: center; justify-content: center; gap: 12px; font-weight: 900; }
.badge { width: 47px; height: 36px; border-radius: 18px; background: #353b48; color: #fff; font-size: 24px; line-height: 36px; }
.hd-body { padding: 39px 22px 67px; }
.activity { display: flex; align-items: center; justify-content: space-between; font-size: 32px; font-weight: 700; }
.activity select { width: 340px; height: 82px; border: 2px solid #aeb1b7; border-radius: 10px; padding: 0 18px; font-weight: normal; font-size: 32px; background: #f5f5f5 url("data:image/svg+xml,%3Csvg xmlns='http://www.w3.org/2000/svg' width='30' height='20'%3E%3Cpath d='M3 3l12 12L27 3' fill='none' stroke='%23b0b3b8' stroke-width='6'/%3E%3C/svg%3E") no-repeat right 18px center; }
.hd-body h4 { margin: 21px 0 24px; font-weight: 700; font-size: 28px; text-decoration: underline; text-underline-offset: 3px; text-decoration-thickness: 2px; }
.activity + h4 { margin-top: 43px; }
.card { position: relative; display: flex; justify-content: space-between; padding: 20px 31px 16px 30px; background: #fff; box-shadow: 0 4px 14px rgba(0, 0, 0, .15); }
.info { display: grid; gap: 15px; }
.info strong { color: #353b48; font-weight: 900; }
.info span { display: flex; align-items: center; gap: 12px; }
.card small { font-size: 24px; }
.state { display: flex; flex-direction: column; align-items: flex-end; }
.tag { height: 51px; padding: 0 15px; border-radius: 8px; background: #f5f5f5; color: #5d6270; font-size: 31px; font-weight: 900; line-height: 50px; }
.ready { background: #f4f9f6; color: #4c9f67; }
.state small { margin: 12px 0 22px; }
.card-actions { display: flex; gap: 21px; }
.card-actions button { width: 132px; height: 60px; border: 2px solid #6b7080; border-radius: 10px; background: #fff; font-weight: 900; font-size: 29px; color: #5d6270; }
.card-actions .collect { border-color: #4c9f67; color: #4c9f67; }
.mark-collect { right: 12px; bottom: 1px; width: 172px; height: 97px; }
.compact { padding-bottom: 15px; padding-top: 22px; }
.compact .info { gap: 12px; }
.hd-body hr { margin: 40px 0 0; border: 0; height: 2px; background: #999; }
.hd-body .none { font-size: 24px; color: #8f9399; }
```
